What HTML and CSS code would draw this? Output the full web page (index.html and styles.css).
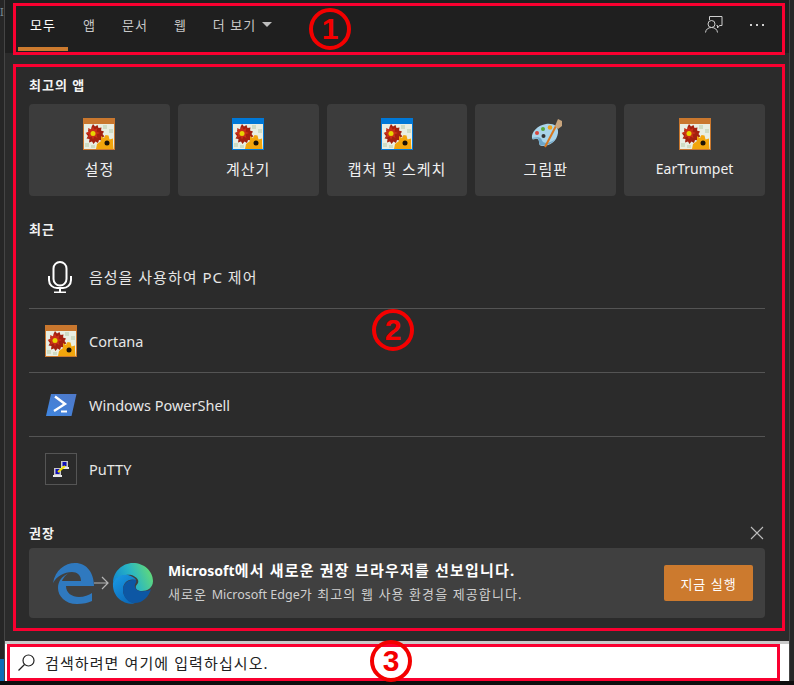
FILE: index.html
```html
<!DOCTYPE html>
<html lang="ko">
<head>
<meta charset="utf-8">
<title>검색</title>
<link rel="stylesheet" href="styles.css">
</head>
<body>
<svg class="defs" width="0" height="0" aria-hidden="true">
  <defs>
    <symbol id="flower" viewBox="0 0 32 32">
      <rect x="0" y="0" width="32" height="32" fill="currentColor"/>
      <rect x="1" y="6" width="30" height="25" fill="#e9eee2"/>
      <path d="M20 7h4v4h-4zM26 11h4v4h-4zM2 25h4v4H2zM8 27h4v3H8z" fill="#cfdcc4"/>
      <path d="M10 6l2 2.500 2.500-1.500 1 3 3-.5-.5 3 3 1-1.500 2.500 2 2.500-3 1 .5 3-3-.5-1 3-2.500-1.500-2 2.500-1.500-2.500-3 1 .5-3.500-3-.5 1.500-2.500-2-2.500 2.500-1-.5-3 3 .5.500-3z" fill="#a3200f"/>
      <path d="M10 8.500l1.500 3 3-1.500-1 3.500 3.500 1.500-3.500 1.500 1 3.500-3-1.500-1.500 3-1.500-3-3.500 1.500 1-3.500-3.500-1.500 3.500-1.500-1-3.500 3.500 1.500z" fill="#c92f18"/>
      <circle cx="10" cy="15.500" r="2.500" fill="#e8d400"/>
      <path d="M13 31l1-5 4-3 0-5 3 2 1.500-3 3 .5 1 4 3.500-1v5l.5 5.500z" fill="#f2a50c"/>
      <circle cx="24" cy="25" r="2.500" fill="#1a1208"/>
    </symbol>
    <linearGradient id="psGrad" x1="0" y1="1" x2="1" y2="0">
      <stop offset="0" stop-color="#3f86e0"/><stop offset="1" stop-color="#4f78c8"/>
    </linearGradient>
    <linearGradient id="edgeTop" x1="0" y1="0.7" x2="1" y2="0.4">
      <stop offset="0" stop-color="#0f86d0"/><stop offset="0.5" stop-color="#29b5c4"/><stop offset="1" stop-color="#62da78"/>
    </linearGradient>
    <linearGradient id="edgeMid" x1="0" y1="0" x2="0.6" y2="1">
      <stop offset="0" stop-color="#1a9be4"/><stop offset="1" stop-color="#0c6cbc"/>
    </linearGradient>
  </defs>
</svg>

<div class="screen">
  <div class="edge edge-left"><span class="edge-glyph">I</span><span class="edge-blue"></span></div>
  <div class="panel">
    <header class="topbar">
      <nav class="tabs">
        <span class="tab tab-active">모두</span>
        <span class="tab">앱</span>
        <span class="tab">문서</span>
        <span class="tab">웹</span>
        <span class="tab">더 보기<svg class="caret" width="10" height="5" viewBox="0 0 10 5"><path d="M0 0h10L5 5z" fill="#bdbdbd"/></svg></span>
      </nav>
      <div class="tools">
        <svg width="18" height="18" viewBox="0 0 18 18" fill="none" stroke="#cfcfcf" stroke-width="1">
          <path d="M4.500 4V.5h12.500v9h-2.500l-2 2.500v-2.500h-1"/>
          <circle cx="6.500" cy="8" r="3.500"/>
          <path d="M.5 16.500c.3-3 2.600-5 6-5s5.700 2 6 5"/>
        </svg>
        <svg width="16" height="4" viewBox="0 0 16 4"><path d="M1 1h2v2H1zM7 1h2v2H7zM13 1h2v2h-2z" fill="#cfcfcf"/></svg>
      </div>
    </header>

    <main class="content">
      <h2 class="heading heading-top">최고의 앱</h2>
      <div class="tiles">
        <div class="tile"><svg class="app-icon tone-orange"><use href="#flower"/></svg><span>설정</span></div>
        <div class="tile"><svg class="app-icon tone-blue"><use href="#flower"/></svg><span>계산기</span></div>
        <div class="tile"><svg class="app-icon tone-blue"><use href="#flower"/></svg><span>캡처 및 스케치</span></div>
        <div class="tile">
          <svg class="app-icon" viewBox="0 0 32 32">
            <path d="M2 20C1 14 8 7 16 6c7-1 13 2 12 9-1 8-8 13-15 13-3 0-4-1-4-4 0-3-2-4-4-3-1 .5-2.500 1-3-1z" fill="#a9d4ea"/>
            <path d="M2 20c1 1 2 1 3 .5 2-1 4 0 4 3 0 3 1 4 4 4 5 0 10-3 13-7-3 3-8 5-12 4-2-.5-2-3-3-4-2-2-6-1-9-.500z" fill="#6fa6c8"/>
            <circle cx="7" cy="15" r="2" fill="#d8453c"/><circle cx="13" cy="11" r="2" fill="#59a83c"/><circle cx="20" cy="9.500" r="2.300" fill="#eda21c"/><circle cx="13.500" cy="18" r="2" fill="#333"/>
            <path d="M15 29L26 8" stroke="#d9781e" stroke-width="2"/>
            <path d="M25 8l3-7 4 2 0 5-4 3z" fill="#c8a47c"/>
          </svg>
          <span>그림판</span>
        </div>
        <div class="tile"><svg class="app-icon tone-orange"><use href="#flower"/></svg><span class="latin-label">EarTrumpet</span></div>
      </div>

      <h2 class="heading heading-recent">최근</h2>
      <ul class="recent">
        <li class="row row-korean">
          <svg class="app-icon" viewBox="0 0 32 32" fill="none" stroke="#fff" stroke-width="2">
            <rect x="8.500" y="1" width="13" height="23.500" rx="6.500"/>
            <path d="M4 15v4c0 5 4 8 8 8h6c4 0 8-3 8-8v-4M15 27v5M9 31.500h12"/>
          </svg>
          <span>음성을 사용하여 PC 제어</span>
        </li>
        <li class="row"><svg class="app-icon tone-orange"><use href="#flower"/></svg><span>Cortana</span></li>
        <li class="row">
          <svg class="app-icon" viewBox="0 0 32 32">
            <path d="M6 5h25.500l-5 22H1z" fill="url(#psGrad)"/>
            <path d="M10 7.500l10 7.500L9 22" fill="none" stroke="#fff" stroke-width="2.400"/>
            <path d="M16 22.500h6" stroke="#fff" stroke-width="2"/>
          </svg>
          <span>Windows PowerShell</span>
        </li>
        <li class="row row-last">
          <svg class="app-icon" viewBox="0 0 32 32">
            <rect x=".5" y=".5" width="31" height="31" fill="none" stroke="#555"/>
            <path d="M16 8h7v6h-7z" fill="#c8c8c8"/><path d="M17.500 9h4v4h-4z" fill="#1010b8"/><path d="M16 14h8v2h-8z" fill="#e8e8e8"/>
            <path d="M9 15h7v7H9z" fill="#c8c8c8"/><path d="M10.500 16h4v5h-4z" fill="#1010b8"/><path d="M8 22h9v2H8z" fill="#e8e8e8"/>
            <path d="M13 19l7-6" stroke="#f2e400" stroke-width="2"/>
          </svg>
          <span>PuTTY</span>
        </li>
      </ul>

      <div class="promo-head">
        <h2 class="heading">권장</h2>
        <svg width="14" height="14" viewBox="0 0 14 14"><path d="M1 1l12 12M13 1L1 13" stroke="#bdbdbd" stroke-width="1.100"/></svg>
      </div>
      <section class="promo">
        <div class="logos">
          <svg width="42" height="41" viewBox="0 0 42 41">
            <path d="M1 20C3 7 13 0 23 0c12 0 19 10 19 23H14c0 7 6 11 13 11 5 0 10-2 13-4v8c-4 2-9 3-15 3C13 41 6 33 6 25c0-7 4-12 11-15-5 3-6 6-7 8h19c0-6-4-9-9-9C12 9 5 13 1 20z" fill="#2f79bf"/>
          </svg>
          <svg class="arrow" width="15" height="14" viewBox="0 0 15 14" fill="none" stroke="#b5b5b5" stroke-width="1.200"><path d="M0 7h14M8 1l6 6-6 6"/></svg>
          <svg width="41" height="41" viewBox="0 0 41 41">
            <path d="M1 20C1 9 10 0 21 0c11 0 20 8 20 18 0 7-6 10-11 10-4 0-7-2-6-5 1-2 3-3 2-6-2-4-7-6-12-5C8 13 3 15 1 20z" fill="url(#edgeTop)"/>
            <path d="M1 20c2-6 9-9 15-8 4 1 7 3 8 5-7-2-13 2-13 10 0 6 5 12 12 13.500C11 42 0 33 1 20z" fill="url(#edgeMid)"/>
            <path d="M11 27c0-7 6-11 13-10 1 3-2 4-1 7 1 4 6 5 10 4 3 0 5-1 6-2-2 8-9 15-18 14C15 39 11 33 11 27z" fill="#0d57a4"/>
          </svg>
        </div>
        <div class="promo-copy">
          <strong><span class="latin-strong">Microsoft</span>에서 새로운 권장 브라우저를 선보입니다.</strong>
          <span class="promo-sub">새로운 <span class="latin-sub">Microsoft Edge</span>가 최고의 웹 사용 환경을 제공합니다.</span>
        </div>
        <button class="cta" type="button">지금 실행</button>
      </section>
    </main>

    <div class="search">
      <svg width="17" height="17" viewBox="0 0 17 17" fill="none" stroke="#222" stroke-width="1.200"><circle cx="10.500" cy="6.500" r="5.500"/><path d="M6.500 10.500L.5 16.500"/></svg>
      <span>검색하려면 여기에 입력하십시오.</span>
    </div>
  </div>
  <div class="edge edge-right"></div>
</div>

<div class="mark mark-one"></div>
<div class="mark mark-two"></div>
<div class="mark mark-three"></div>
<div class="badge badge-one">1</div>
<div class="badge badge-two">2</div>
<div class="badge badge-three">3</div>
</body>
</html>
```

FILE: styles.css
```css
* { box-sizing: border-box; }

html, body { margin: 0; padding: 0; }

body {
  position: relative;
  width: 794px;
  height: 685px;
  overflow: hidden;
  background: #0e0e0e;
  font-family: "Noto Sans", "Noto Sans CJK KR", sans-serif;
  color: #f2f2f2;
}

.defs { position: absolute; }

.screen {
  display: flex;
  height: 681px;
}

.edge {
  flex: 0 0 5px;
  display: flex;
  flex-direction: column;
  background: #262626;
  border-right: 1px solid #454545;
  overflow: hidden;
}

.edge-right {
  border-right: 0;
  border-left: 1px solid #454545;
}

.edge-glyph {
  margin-top: 5px;
  font-size: 11px;
  line-height: 14px;
  color: #7b8c96;
}

.edge-blue {
  margin-top: auto;
  height: 22px;
  background: #0b6fb8;
}

.panel {
  flex: 1;
  display: flex;
  flex-direction: column;
  min-width: 0;
}

.topbar {
  flex: 0 0 53px;
  display: flex;
  justify-content: space-between;
  background: #1f1f1f;
}

.tabs {
  display: flex;
  padding-left: 13px;
  height: 51px;
}

.tab {
  display: flex;
  align-items: center;
  gap: 6px;
  padding: 1px 12px 0;
  margin-right: 2px;
  font-size: 13px;
  letter-spacing: 1px;
  color: #c8c8c8;
  border-bottom: 4px solid transparent;
}

.tab-active {
  width: 50px;
  margin-right: 3px;
  color: #fff;
  border-bottom-color: #cc7a2e;
}

.tools {
  display: flex;
  align-items: center;
  gap: 26px;
  padding: 0 24px 3px 0;
}

.content {
  flex: 1;
  display: flex;
  flex-direction: column;
  padding: 0 24px;
  background: #2b2b2b;
}

.heading {
  margin: 0;
  font-size: 13px;
  letter-spacing: 1px;
  line-height: 16px;
  font-weight: 700;
  color: #f2f2f2;
}

.heading-top { margin-top: 24px; }
.heading-recent { margin-top: 25px; }

.tiles {
  display: grid;
  grid-template-columns: repeat(5, 1fr);
  gap: 8px;
  margin-top: 11px;
}

.tile {
  height: 92px;
  display: flex;
  flex-direction: column;
  align-items: center;
  padding-top: 14px;
  background: #3c3c3c;
  border-radius: 4px;
  font-size: 15px;
  letter-spacing: 1px;
  line-height: 22px;
  color: #f0f0f0;
}

.tile span { margin-top: 8px; }

.tile .latin-label {
  font-size: 14px;
  letter-spacing: 0;
}

.app-icon {
  flex: 0 0 32px;
  width: 32px;
  height: 32px;
  display: block;
}

.tone-orange { color: #c9772e; }
.tone-blue { color: #0078d7; }

.recent {
  list-style: none;
  margin: 8px 0 0;
  padding: 0;
}

.row {
  height: 64px;
  display: flex;
  align-items: center;
  gap: 12px;
  padding-left: 16px;
  font-size: 14.5px;
  color: #e6e6e6;
  border-bottom: 1px solid #545454;
}

.row-korean {
  font-size: 15px;
  letter-spacing: 1px;
}

.row-last { border-bottom: 0; }

.promo-head {
  display: flex;
  justify-content: space-between;
  align-items: center;
  margin-top: 24px;
  height: 16px;
  padding-right: 1px;
}

.promo {
  display: flex;
  align-items: center;
  height: 70px;
  margin-top: 7px;
  padding: 0 12px 0 23px;
  background: #404040;
  border-radius: 4px;
}

.logos {
  display: flex;
  align-items: center;
  width: 116px;
}

.arrow { margin-right: 3px; }

.promo-copy {
  flex: 1;
  display: flex;
  flex-direction: column;
  gap: 4px;
  padding-bottom: 3px;
}

.promo-copy strong {
  font-size: 15px;
  letter-spacing: 1.2px;
  line-height: 20px;
  color: #fff;
}

.latin-strong {
  font-size: 14px;
  letter-spacing: 0;
}

.promo-sub {
  font-size: 13px;
  letter-spacing: 1.1px;
  line-height: 18px;
  color: #cfcfcf;
}

.latin-sub {
  font-size: 12.5px;
  letter-spacing: 0;
}

.cta {
  width: 89px;
  height: 36px;
  padding: 0;
  border: 0;
  border-radius: 2px;
  background: #cc7a2e;
  color: #fff;
  font: inherit;
  font-size: 13px;
  letter-spacing: 1px;
}

.search {
  flex: 0 0 40px;
  display: flex;
  align-items: center;
  gap: 10px;
  padding-left: 13px;
  background: #fff;
  border-top: 3px solid #c9c9c9;
  font-size: 15px;
  letter-spacing: 1.1px;
  color: #222;
}

.mark {
  position: absolute;
  border: 3px solid #fa0030;
}

.mark-one { left: 13px; top: 3px; width: 772px; height: 52px; }
.mark-two { left: 13px; top: 64px; width: 772px; height: 567px; }
.mark-three { left: 7px; top: 644px; width: 773px; height: 37px; }

.badge {
  position: absolute;
  width: 42px;
  height: 42px;
  display: flex;
  align-items: center;
  justify-content: center;
  border: 4px solid #f40000;
  border-radius: 50%;
  color: #f40000;
  font-family: "Liberation Sans", sans-serif;
  font-size: 30px;
  font-weight: 700;
}

.badge-one { left: 309px; top: 8px; }
.badge-two { left: 372px; top: 309px; }
.badge-three { left: 370px; top: 640px; }
```
